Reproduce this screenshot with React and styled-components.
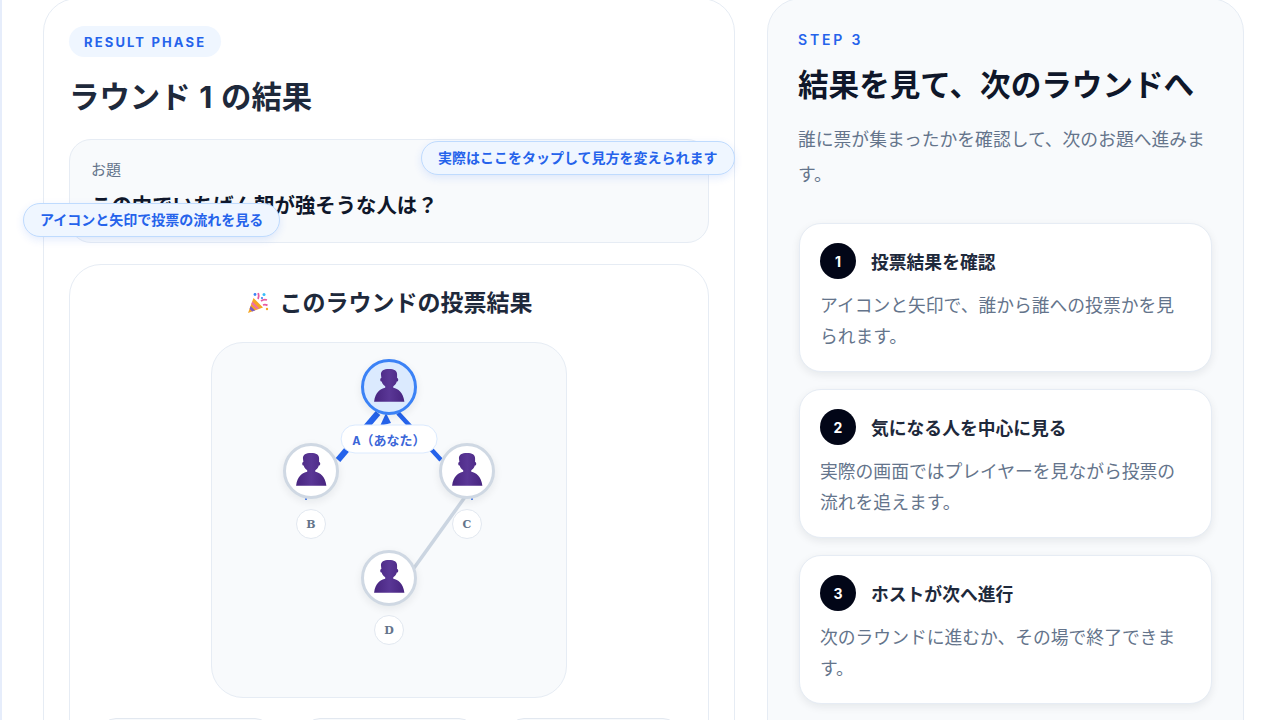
import React from 'react';
import styled, { createGlobalStyle } from 'styled-components';

const GlobalStyle = createGlobalStyle`
    html, body {
        margin: 0;
        height: 720px;
        overflow: hidden;
        background: #ffffff;
    }
    * { box-sizing: border-box; }
    body {
        font-family: "Inter", "Noto Sans CJK JP", sans-serif;
        color: #0f172a;
    }
`;

const Page = styled.div`
    height: 720px;
    overflow: hidden;
    display: flex;
    align-items: flex-start;
    gap: 32px;
    padding-left: 43px;
    border-left: 2px solid #e6edfb;
`;

const ResultCard = styled.section`
    position: relative;
    width: 692px;
    flex: none;
    margin-left: -2px;
    margin-top: -2px;
    padding: 27px 25px 0;
    background: #fff;
    border: 1px solid #e6ecf4;
    border-radius: 34px;
`;

const Badge = styled.div`
    display: inline-flex;
    align-items: center;
    height: 31px;
    padding: 0 15px;
    border-radius: 16px;
    background: #eff6ff;
    color: #2563eb;
    font-size: 13px;
    font-weight: 700;
    letter-spacing: 0.165em;
`;

const ResultTitle = styled.h2`
    margin: 18px 0 0;
    font-size: 30.4px;
    line-height: 44px;
    font-weight: 700;
    word-spacing: 1.5px;
    color: #1e293b;
`;

const QuestionBox = styled.div`
    margin-top: 20px;
    height: 104px;
    padding: 19px 21px;
    background: #f8fafc;
    border: 1px solid #e6ecf4;
    border-radius: 22px;
`;

const QuestionLabel = styled.div`
    font-size: 15px;
    line-height: 22px;
    color: #64748b;
`;

const QuestionText = styled.div`
    margin-top: 10px;
    font-size: 20.4px;
    line-height: 30px;
    font-weight: 700;
    color: #0f172a;
`;

const Hint = styled.div`
    position: absolute;
    top: ${p => p.$top}px;
    left: ${p => p.$left}px;
    height: 34px;
    display: flex;
    align-items: center;
    padding: 0 16px 3px;
    white-space: nowrap;
    background: #eff6ff;
    border: 1px solid #bfdbfe;
    border-radius: 18px;
    color: #2563eb;
    font-size: 14px;
    font-weight: 700;
    box-shadow: 0 3px 8px rgba(37, 99, 235, 0.12);
`;

const VotePanel = styled.div`
    margin-top: 21px;
    padding: 21px 26px 24px;
    background: #fff;
    border: 1px solid #e6ecf4;
    border-radius: 32px;
`;

const VoteTitle = styled.h3`
    margin: 0;
    display: flex;
    justify-content: center;
    align-items: center;
    gap: 10px;
    font-size: 23px;
    line-height: 34px;
    font-weight: 700;
    color: #1e293b;
`;

const Diagram = styled.div`
    position: relative;
    width: 356px;
    height: 356px;
    margin: 22px auto 0;
    background: #f8fafc;
    border: 1px solid #e6ecf4;
    border-radius: 32px;
`;

const Lines = styled.svg`
    position: absolute;
    inset: 0;
    width: 100%;
    height: 100%;
`;

const Avatar = styled.div`
    position: absolute;
    left: ${p => p.$x - 28}px;
    top: ${p => p.$y - 28}px;
    width: 56px;
    height: 56px;
    display: flex;
    align-items: center;
    justify-content: center;
    border-radius: 50%;
    background: ${p => (p.$me ? '#dbeafe' : '#fff')};
    border: 3px solid ${p => (p.$me ? '#3b82f6' : '#cfd8e3')};
    box-shadow: 0 3px 8px rgba(15, 23, 42, 0.08);
`;

const NameChip = styled.div`
    position: absolute;
    left: ${p => p.$x}px;
    top: ${p => p.$y}px;
    transform: translate(-50%, -50%);
    height: ${p => (p.$me ? 29 : 30)}px;
    min-width: 30px;
    padding: 0 ${p => (p.$me ? 11 : 0)}px;
    display: flex;
    align-items: center;
    justify-content: center;
    white-space: nowrap;
    background: #fff;
    border: 1px solid ${p => (p.$me ? '#dbeafe' : '#e2e8f0')};
    border-radius: 15px;
    color: ${p => (p.$me ? '#3b66d8' : '#64748b')};
    font-family: ${p => (p.$me ? '"Liberation Mono", "Noto Sans CJK JP", monospace' : '"DejaVu Serif", serif')};
    font-size: ${p => (p.$me ? 13 : 11)}px;
    font-weight: ${p => (p.$me ? 600 : 700)};
`;

const Legend = styled.div`
    display: grid;
    grid-template-columns: repeat(3, 171px);
    justify-content: center;
    gap: 33px;
    margin-top: 20px;
`;

const LegendItem = styled.div`
    height: 60px;
    background: #f8fafc;
    border: 1px solid #e2e8f0;
    border-radius: 16px;
`;

const GuideCard = styled.aside`
    width: 477px;
    flex: none;
    margin-top: -2px;
    padding: 32px 31px 0 30px;
    height: 760px;
    background: #f8fafc;
    border: 1px solid #e6ecf4;
    border-radius: 34px;
`;

const StepLabel = styled.div`
    font-size: 14px;
    line-height: 18px;
    font-weight: 600;
    letter-spacing: 0.2em;
    color: #2563eb;
`;

const GuideTitle = styled.h2`
    margin: 14px 0 0;
    font-size: 30.6px;
    line-height: 44px;
    font-weight: 700;
    color: #0f172a;
`;

const GuideLead = styled.p`
    margin: 15px 0 0;
    font-size: 17.8px;
    line-height: 35.2px;
    color: #64748b;
`;

const StepList = styled.div`
    display: flex;
    flex-direction: column;
    gap: 17px;
    margin: 31px 0 0 1px;
`;

const StepCard = styled.div`
    height: 149px;
    padding: 19px 20px;
    background: #fff;
    border: 1px solid #e6ecf4;
    border-radius: 22px;
    box-shadow: 0 3px 8px rgba(15, 23, 42, 0.08);
`;

const StepHead = styled.div`
    display: flex;
    align-items: center;
    gap: 15px;
`;

const StepNumber = styled.div`
    width: 36px;
    height: 36px;
    flex: none;
    display: flex;
    align-items: center;
    justify-content: center;
    border-radius: 50%;
    background: #020617;
    color: #fff;
    font-size: 14px;
    font-weight: 700;
`;

const StepTitle = styled.div`
    font-size: 17.8px;
    font-weight: 700;
    color: #1e293b;
`;

const StepBody = styled.p`
    margin: 11px 0 0;
    font-size: 17.8px;
    line-height: 31px;
    color: #64748b;
`;

const Person = () => (
    <svg width="38" height="38" viewBox="0 0 40 36" preserveAspectRatio="none">
        <defs>
            <linearGradient id="personFill" x1="0" y1="0" x2="1" y2="0">
                <stop offset="0" stopColor="#47247f" />
                <stop offset="0.5" stopColor="#5a3796" />
                <stop offset="1" stopColor="#47247f" />
            </linearGradient>
        </defs>
        <path
            d="M11.500 6C11.500 2.500 14.500 1 20 1s8.500 1.500 8.500 5v3.500c.9 0 1.300.8 1.200 1.800-.1.900-.7 1.500-1.500 1.600-.6 2-1.800 3.500-3.700 4.500v1.300c5 1.100 10.300 3.800 11.700 13.300H4.300c1.400-9.500 6.700-12.200 11.700-13.300v-1.300c-1.900-1-3.100-2.500-3.700-4.500-.8-.1-1.400-.7-1.500-1.600-.1-1 .3-1.800 1.200-1.800z"
            fill="url(#personFill)"
        />
    </svg>
);

const Popper = () => (
    <svg width="24" height="24" viewBox="0 0 24 24">
        <path d="M2 22l5.500-15L17 16.500z" fill="#f6a623" />
        <path d="M4.600 15l4.500 4.500-3 1.100-2.500-2.500z" fill="#7c5cc4" />
        <path d="M6.300 10.500l7 6.800-2.500 1-5.500-5.300z" fill="#ec6fa8" />
        <path d="M12 8c1-2 1-4 .2-6M15 10c2-1.500 4-1.700 6-1M17 14c1.500-.5 3-.4 4.500.4" stroke="#e85aa0" strokeWidth="1.800" fill="none" />
        <circle cx="9" cy="3.500" r="1.400" fill="#3b82f6" />
        <circle cx="18" cy="3.500" r="1.500" fill="#38bdf8" />
        <circle cx="16" cy="7" r="1.100" fill="#3b82f6" />
        <circle cx="21" cy="18" r="1.200" fill="#f6a623" />
    </svg>
);

const nodes = [
    { id: 'A', x: 177, y: 44, me: true },
    { id: 'B', x: 99, y: 128 },
    { id: 'C', x: 255, y: 128 },
    { id: 'D', x: 177, y: 235 },
];

const chips = [
    { label: 'A（あなた）', x: 177, y: 96, me: true },
    { label: 'B', x: 99, y: 181 },
    { label: 'C', x: 255, y: 181 },
    { label: 'D', x: 177, y: 287 },
];

const steps = [
    { title: '投票結果を確認', body: 'アイコンと矢印で、誰から誰への投票かを見られます。' },
    { title: '気になる人を中心に見る', body: '実際の画面ではプレイヤーを見ながら投票の流れを追えます。' },
    { title: 'ホストが次へ進行', body: '次のラウンドに進むか、その場で終了できます。' },
];

const App = () => (
    <>
        <GlobalStyle />
        <Page>
            <ResultCard>
                <Badge>RESULT PHASE</Badge>
                <ResultTitle>ラウンド 1 の結果</ResultTitle>
                <QuestionBox>
                    <QuestionLabel>お題</QuestionLabel>
                    <QuestionText>この中でいちばん朝が強そうな人は？</QuestionText>
                </QuestionBox>
                <VotePanel>
                    <VoteTitle><Popper />このラウンドの投票結果</VoteTitle>
                    <Diagram>
                        <Lines viewBox="0 0 354 354">
                            <path d="M126 117L166 70" stroke="#2563eb" strokeWidth="6" />
                            <path d="M229 117L186 70" stroke="#2563eb" strokeWidth="4.500" />
                            <path d="M174 70l-6 13 11-3z" fill="#2563eb" />
                            <path d="M202 225L253 154" stroke="#cbd5e1" strokeWidth="3.500" />
                            <circle cx="94" cy="156" r="1" fill="#2563eb" />
                            <circle cx="260" cy="156" r="1" fill="#2563eb" />
                        </Lines>
                        {nodes.map(n => (
                            <Avatar key={n.id} $x={n.x} $y={n.y} $me={n.me}><Person /></Avatar>
                        ))}
                        {chips.map(c => (
                            <NameChip key={c.label} $x={c.x} $y={c.y} $me={c.me}>{c.label}</NameChip>
                        ))}
                    </Diagram>
                    <Legend>
                        <LegendItem />
                        <LegendItem />
                        <LegendItem />
                    </Legend>
                </VotePanel>
                <Hint $top={142} $left={377}>実際はここをタップして見方を変えられます</Hint>
                <Hint $top={204} $left={-21}>アイコンと矢印で投票の流れを見る</Hint>
            </ResultCard>
            <GuideCard>
                <StepLabel>STEP 3</StepLabel>
                <GuideTitle>結果を見て、次のラウンドへ</GuideTitle>
                <GuideLead>誰に票が集まったかを確認して、次のお題へ進みます。</GuideLead>
                <StepList>
                    {steps.map((s, i) => (
                        <StepCard key={s.title}>
                            <StepHead>
                                <StepNumber>{i + 1}</StepNumber>
                                <StepTitle>{s.title}</StepTitle>
                            </StepHead>
                            <StepBody>{s.body}</StepBody>
                        </StepCard>
                    ))}
                </StepList>
            </GuideCard>
        </Page>
    </>
);

export default App;
